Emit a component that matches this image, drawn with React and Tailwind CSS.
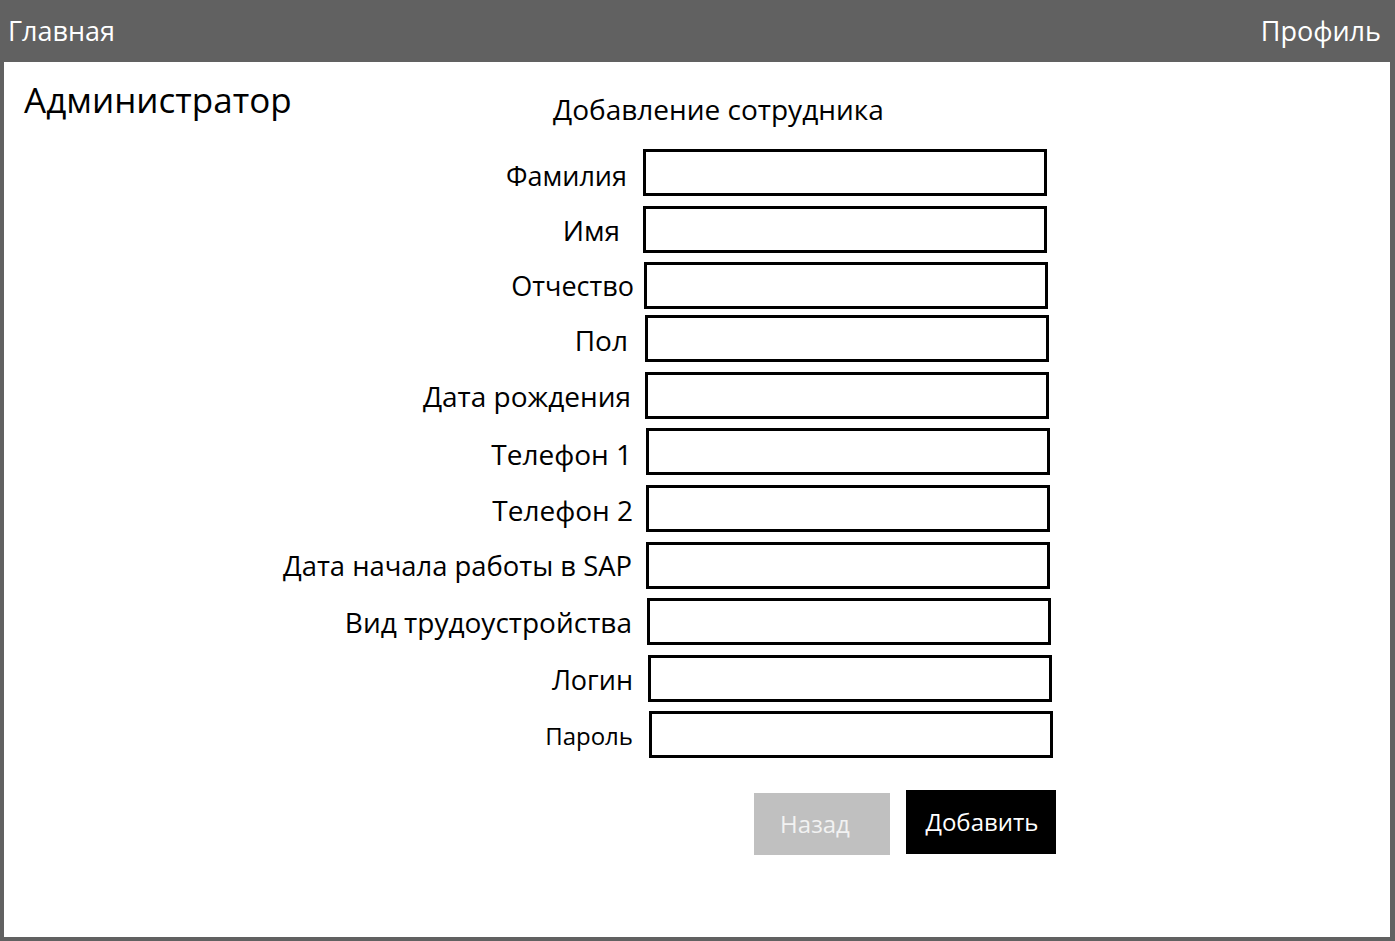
const fields = [
  { label: 'Фамилия', pr: 'pr-[16px]', ml: 'ml-0', mt: 'mt-0', size: 'text-[27px]', pt: 'pt-[6px]' },
  { label: 'Имя', pr: 'pr-[23px]', ml: 'ml-0', mt: 'mt-[10px]', size: 'text-[28px]', pt: 'pt-[1px]' },
  { label: 'Отчество', pr: 'pr-[9px]', ml: 'ml-[1px]', mt: 'mt-[9px]', size: 'text-[27px]', pt: 'pt-0' },
  { label: 'Пол', pr: 'pr-[15px]', ml: 'ml-[2px]', mt: 'mt-[6px]', size: 'text-[28px]', pt: 'pt-[2px]' },
  { label: 'Дата рождения', pr: 'pr-[12px]', ml: 'ml-[2px]', mt: 'mt-[10px]', size: 'text-[28px]', pt: 'pt-0' },
  { label: 'Телефон 1', pr: 'pr-[11px]', ml: 'ml-[3px]', mt: 'mt-[9px]', size: 'text-[28px]', pt: 'pt-[4px]' },
  { label: 'Телефон 2', pr: 'pr-[10px]', ml: 'ml-[3px]', mt: 'mt-[10px]', size: 'text-[28px]', pt: 'pt-[2px]' },
  { label: 'Дата начала работы в SAP', pr: 'pr-[11px]', ml: 'ml-[3px]', mt: 'mt-[10px]', size: 'text-[27.4px]', pt: 'pt-0' },
  { label: 'Вид трудоустройства', pr: 'pr-[11px]', ml: 'ml-[4px]', mt: 'mt-[9px]', size: 'text-[28px]', pt: 'pt-0' },
  { label: 'Логин', pr: 'pr-[10px]', ml: 'ml-[5px]', mt: 'mt-[10px]', size: 'text-[27px]', pt: 'pt-[2px]' },
  { label: 'Пароль', pr: 'pr-[10px]', ml: 'ml-[6px]', mt: 'mt-[9px]', size: 'text-[24px]', pt: 'pt-[2px]' },
];

export default function App() {
  return (
    <div
      className="h-screen w-full flex flex-col bg-[#616161] pl-[4px] pr-[5px] pb-[4px] text-black"
      style={{ fontFamily: '"Open Sans", "Noto Sans", sans-serif' }}
    >
      {/* Top bar */}
      <div className="h-[62px] shrink-0 flex items-center justify-between pl-[4px] pr-[9px] pb-[2px] text-white text-[27px] leading-none">
        <span>Главная</span>
        <span>Профиль</span>
      </div>

      {/* Content */}
      <div className="flex-1 bg-white flex flex-col">
        <div className="h-[87px] flex items-start">
          <div className="w-[549px] pl-[20px] pt-[20px] text-[35px] leading-none">Администратор</div>
          <div className="pt-[33px] text-[28px] leading-none">Добавление сотрудника</div>
        </div>

        {fields.map((f) => (
          <div key={f.label} className={`flex items-center ${f.mt}`}>
            <div className={`w-[639px] flex justify-end ${f.pr} ${f.pt} ${f.size} leading-none`}>
              {f.label}
            </div>
            <div className={`w-[404px] h-[47px] border-[3px] border-black ${f.ml}`} />
          </div>
        ))}

        <div className="flex items-start mt-[32px] pl-[750px] gap-[16px]">
          <button className="mt-[3px] w-[136px] h-[62px] pr-[14px] bg-[#c0c0c0] text-[#f2f2f2] text-[24px] leading-none">
            Назад
          </button>
          <button className="w-[150px] h-[64px] pl-[2px] bg-black text-white text-[24px] leading-none">
            Добавить
          </button>
        </div>
      </div>
    </div>
  );
}
